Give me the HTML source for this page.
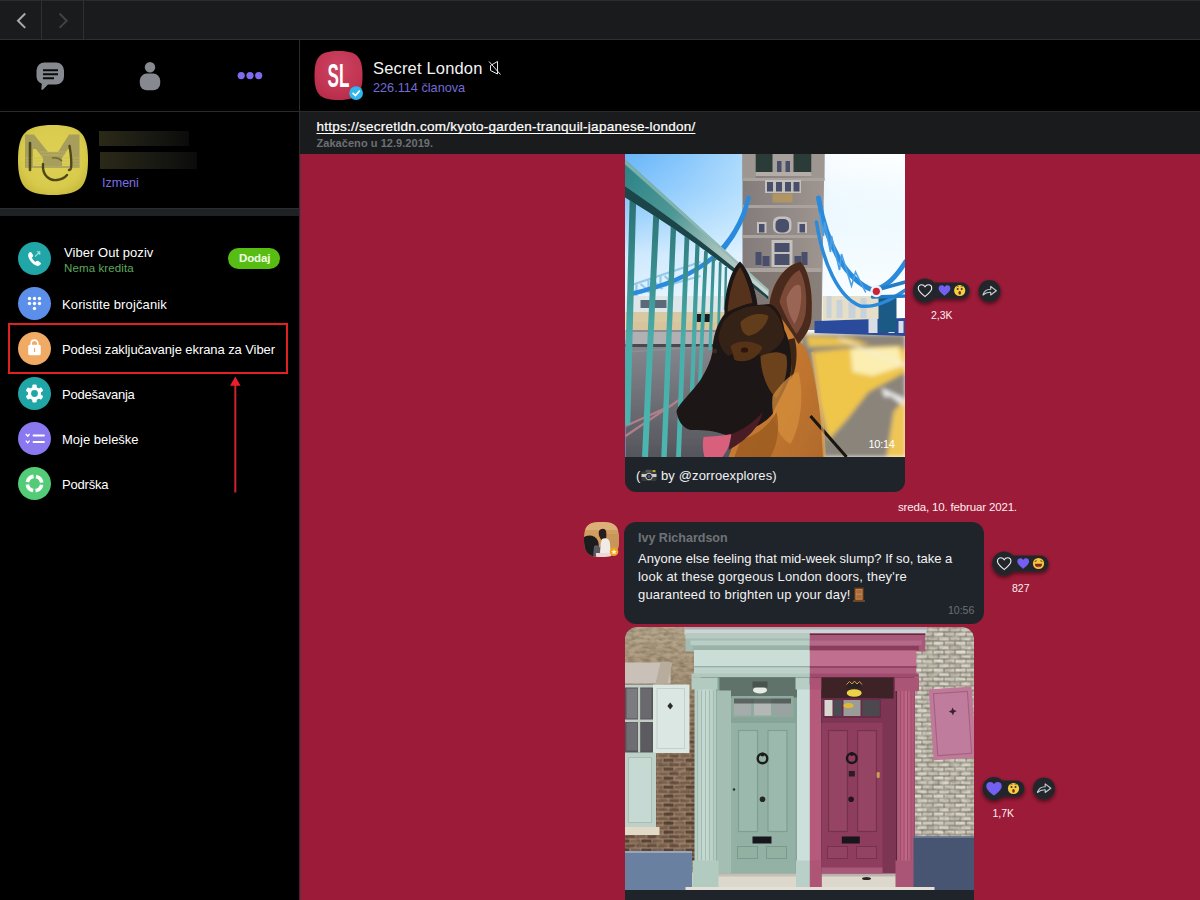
<!DOCTYPE html>
<html lang="sr">
<head>
<meta charset="utf-8">
<title>Viber</title>
<style>
*{box-sizing:border-box;margin:0;padding:0}
html,body{width:1200px;height:900px;overflow:hidden;background:#000}
body{font-family:"Liberation Sans","DejaVu Sans",sans-serif;color:#fff;position:relative}
.abs{position:absolute}
#topbar{left:0;top:0;width:1200px;height:40px;background:#1a1b1d;border-top:1px solid #2a2c2e;border-bottom:1px solid #2e3032}
#topbar .v{position:absolute;top:0;width:1px;height:38px;background:#2e3032}
#side{left:0;top:40px;width:299px;height:860px;background:#000}
#sideline{left:299px;top:40px;width:1px;height:860px;background:#2a2c2e}
#sideline2{left:299px;top:154px;width:2px;height:746px;background:linear-gradient(90deg,#3a1c26,#7d3048)}
#navline{left:0;top:111px;width:1200px;height:1px;background:#292a2c}
#sep{left:0;top:208px;width:299px;height:8px;background:#1e2224;border-top:1px solid #2a2e30}
#chathead{left:300px;top:40px;width:900px;height:71px;background:#000}
#pinned{left:300px;top:112px;width:900px;height:42px;background:#1a1b1d}
#chat{left:300px;top:154px;width:900px;height:746px;background:#9c1b38}
.t{position:absolute;white-space:nowrap;line-height:1}
.ic{position:absolute;width:33px;height:33px;border-radius:50%}
</style>
</head>
<body>
<div id="topbar" class="abs"><div class="v" style="left:41px"></div><div class="v" style="left:83px"></div>
<svg class="abs" style="left:0;top:0" width="90" height="40" viewBox="0 0 90 40"><path d="M25.200 12.500 L18 19.700 L25.200 26.900" fill="none" stroke="#a9abae" stroke-width="2"/><path d="M59.500 12.500 L66.700 19.700 L59.500 26.900" fill="none" stroke="#3f4246" stroke-width="2"/></svg>
</div>
<div id="side" class="abs"></div>
<div id="sideline" class="abs"></div><div id="sideline2" class="abs" style="z-index:2"></div>
<div id="chathead" class="abs"></div>
<div id="navline" class="abs"></div>
<div id="sep" class="abs"></div>
<div id="pinned" class="abs"></div>
<div id="chat" class="abs"></div>
<svg class="abs" style="left:0;top:40px" width="299" height="70" viewBox="0 40 299 70">
<path d="M44.5 62.5 h11.5 a8 8 0 0 1 8 8 v6 a8 8 0 0 1 -8 8 h-8 l-5 5 q-1.6 1.2 -1.6 -0.8 l0.4 -5 a8 8 0 0 1 -5.3 -7.2 v-6 a8 8 0 0 1 8 -8z" fill="#868a90"/>
<path d="M43 70.2h15M43 74.2h15M43 78.2h11" stroke="#0a0a0a" stroke-width="2"/>
<circle cx="150" cy="67.3" r="5.2" fill="#868a90"/>
<rect x="139.8" y="73.6" width="20.4" height="16.6" rx="7" ry="7" fill="#868a90"/>
<circle cx="241.2" cy="75.6" r="3.6" fill="#7d6bef"/><circle cx="250" cy="75.6" r="3.6" fill="#7d6bef"/><circle cx="258.7" cy="75.6" r="3.6" fill="#7d6bef"/>
</svg>
<svg class="abs" style="left:0;top:111px" width="299" height="97" viewBox="0 111 299 97">
<defs>
<radialGradient id="yg" cx="0.5" cy="0.45" r="0.6"><stop offset="0" stop-color="#ddd055"/><stop offset="0.75" stop-color="#d8cb4c"/><stop offset="1" stop-color="#c8b93c"/></radialGradient>
<linearGradient id="rb" x1="0" x2="1"><stop offset="0" stop-color="#2b2917"/><stop offset="0.5" stop-color="#1b1b14"/><stop offset="1" stop-color="#0b0b0b"/></linearGradient>
</defs>
<path d="M53 125 C80 125 88 133 88 160 C88 187 80 195 53 195 C26 195 18 187 18 160 C18 133 26 125 53 125Z" fill="url(#yg)"/>
<path d="M25 168 V134.5 H34 L48 152 H58 L69 134.5 H79.5 V168 H25Z M33 166 H43 V158 L36 149 H33Z M62 158 V166 H70 V149 H68Z" fill="#a39a5c" fill-rule="evenodd" opacity="0.92"/>
<path d="M26 158h17M26 161h17M26 164h17M26 167h53M62 158h17M62 161h17M62 164h17M40 152h26M40 155h26" stroke="#c4ba66" stroke-width="0.8" opacity="0.8"/>
<path d="M30 143 V170" stroke="#3d380f" stroke-width="2.6" stroke-linecap="round" opacity="0.85"/>
<path d="M69.5 146 Q72 160 71 168 Q70.5 170 69 170" fill="none" stroke="#3d380f" stroke-width="2.4" stroke-linecap="round" opacity="0.85"/>
<path d="M43 164 C42 176 50 181 57 180 C62 179.5 65 177.5 67 175" fill="none" stroke="#3d380f" stroke-width="2.4" stroke-linecap="round" opacity="0.9"/>
<path d="M52 158 Q58 157 62 161" fill="none" stroke="#5a5220" stroke-width="1.6" opacity="0.7"/>
<rect x="99" y="131" width="90" height="15" fill="url(#rb)"/>
<rect x="100" y="152" width="97" height="17" fill="url(#rb)"/>
</svg>
<div class="t" style="left:102px;top:177px;font-size:12.5px;color:#7b6fe6">Izmeni</div>
<div class="ic" style="left:18px;top:242px;background:#20a6a6"></div>
<div class="ic" style="left:18px;top:287px;background:#5b8fe9"></div>
<div class="ic" style="left:18px;top:332px;background:#f0aa64"></div>
<div class="ic" style="left:18px;top:377px;background:#20a6a6"></div>
<div class="ic" style="left:18px;top:422px;background:#8a78f0"></div>
<div class="ic" style="left:18px;top:467px;background:#52cc76"></div>
<svg class="abs" style="left:18px;top:242px" width="33" height="258" viewBox="18 242 33 258">
<!-- phone -->
<path d="M29.2 252.6 q1.4 -1.2 2.4 0.2 l1.4 2.2 q0.6 1.2 -0.4 2 l-0.8 0.7 q1.2 2.6 3.6 4.2 l0.9 -0.8 q0.9 -0.8 2 -0.1 l2 1.4 q1.2 1 0.2 2.2 q-1.8 2.2 -4.4 1 q-5.4 -2.6 -7.6 -8.400000000000001 q-0.9 -2.8 0.7 -4.6z" fill="#fff"/>
<path d="M35 256.6 l4.6 -4.6 M36.8 251.8 h3 v3" fill="none" stroke="#9fe0e0" stroke-width="1.1"/>
<!-- dialpad -->
<g fill="#fff"><circle cx="29.5" cy="298.5" r="1.7"/><circle cx="34.5" cy="298.5" r="1.7"/><circle cx="39.5" cy="298.5" r="1.7"/><circle cx="29.5" cy="303.5" r="1.7"/><circle cx="34.5" cy="303.5" r="1.7"/><circle cx="39.5" cy="303.5" r="1.7"/><circle cx="34.5" cy="308.5" r="1.7"/></g>
<!-- lock -->
<path d="M31.2 345 v-1.6 a3.3 3.3 0 0 1 6.6 0 v1.6" fill="none" stroke="#fff" stroke-width="1.6"/>
<rect x="28.2" y="344.8" width="12.6" height="10.4" rx="1.6" fill="#fff"/>
<rect x="34" y="348" width="1.1" height="4" fill="#f0aa64"/>
<!-- gear -->
<g transform="translate(34.5 393.5)"><g fill="#fff"><circle r="6.6"/><g id="tt"><rect x="-2.2" y="-9" width="4.4" height="18" rx="1.2"/></g><use href="#tt" transform="rotate(60)"/><use href="#tt" transform="rotate(120)"/></g><circle r="3.4" fill="#20a6a6"/></g>
<!-- notes -->
<g stroke="#fff" fill="none" stroke-width="1.8" stroke-linecap="round"><path d="M33.500 435.500h10.500M33.500 442h10.500"/></g>
<g stroke="#fff" fill="none" stroke-width="1.3"><path d="M25.800 434l1.900 2.200 1.900-2.200M25.800 440.600l1.900 2.200 1.900-2.200"/></g>
<!-- support -->
<circle cx="34.5" cy="483.5" r="7.2" fill="none" stroke="#fff" stroke-width="3.6" stroke-dasharray="8.9 2.4" stroke-dashoffset="10.050"/>
</svg>
<div class="t" style="left:64px;top:245.5px;font-size:13px;letter-spacing:0.05px">Viber Out poziv</div>
<div class="t" style="left:64px;top:263px;font-size:11.5px;letter-spacing:0.12px;color:#5fa85e">Nema kredita</div>
<div class="abs" style="left:228px;top:248px;width:52px;height:21px;border-radius:10.5px;background:#58bd12"></div>
<div class="t" style="left:239px;top:253.200px;font-size:11.5px;font-weight:700;letter-spacing:-0.15px;color:#f0ffe8">Dodaj</div>
<div class="t" style="left:62px;top:297.5px;font-size:13px;letter-spacing:0.12px">Koristite brojčanik</div>
<div class="t" style="left:62px;top:342.5px;font-size:13px;letter-spacing:-0.08px">Podesi zaključavanje ekrana za Viber</div>
<div class="t" style="left:62px;top:387.5px;font-size:13px;letter-spacing:-0.24px">Podešavanja</div>
<div class="t" style="left:62px;top:432.5px;font-size:13px">Moje beleške</div>
<div class="t" style="left:62px;top:477.5px;font-size:13px;letter-spacing:-0.2px">Podrška</div>
<div class="abs" style="left:8px;top:323px;width:280px;height:51px;border:2px solid #e0211f"></div>
<svg class="abs" style="left:226px;top:374px" width="20" height="122" viewBox="226 374 20 122"><path d="M235.3 384 V492.5" stroke="#cc2232" stroke-width="2"/><path d="M235.3 376.5 L240.6 385.8 H230 Z" fill="#ea1f2a"/></svg>
<svg class="abs" style="left:300px;top:41px" width="220" height="69" viewBox="300 41 220 69">
<defs><radialGradient id="slg" cx="0.5" cy="0.35" r="0.75"><stop offset="0" stop-color="#cc4463"/><stop offset="0.6" stop-color="#c23553"/><stop offset="1" stop-color="#b02a47"/></radialGradient></defs>
<path d="M338.5 51 C357 51 362.5 56.5 362.5 75.5 C362.5 94.5 357 100 338.5 100 C320 100 314.5 94.500 314.500 75.5 C314.500 56.5 320 51 338.5 51Z" fill="url(#slg)"/>
<text x="327.6" y="87.300" font-family="'Liberation Sans',sans-serif" font-weight="700" font-size="33" fill="#fff" textLength="21.8" lengthAdjust="spacingAndGlyphs">SL</text>
<circle cx="356.1" cy="93.1" r="6.9" fill="#2fb6ee"/>
<path d="M352.6 92.8 L355.4 95.6 L359.8 90.6" fill="none" stroke="#fff" stroke-width="1.7"/>
<g fill="none" stroke="#e8e8e8" stroke-width="1"><path d="M490.5 65.5 L497.500 61.5 V74 L490.5 70.5 Z"/><path d="M489 61.5 L500.5 74.5"/></g>
</svg>
<div class="t" style="left:373px;top:59.5px;font-size:16.5px;letter-spacing:0.17px;color:#f4f4f4">Secret London</div>
<div class="t" style="left:373px;top:82px;font-size:12.7px;color:#746bd6">226.114 članova</div>
<div class="t" style="left:316.5px;top:120px;font-size:13.5px;font-weight:400;-webkit-text-stroke:0.22px #fff;letter-spacing:0.25px;text-decoration:underline;text-underline-offset:1.6px;text-decoration-thickness:1.3px;text-decoration-skip-ink:none">https://secretldn.com/kyoto-garden-tranquil-japanese-london/</div>
<div class="t" style="left:316.5px;top:137.5px;font-size:11px;font-weight:700;letter-spacing:0.05px;color:#6c7074">Zakačeno u 12.9.2019.</div>
<!-- dog message -->
<div class="abs" style="left:624.5px;top:154px;width:280.5px;height:337.5px;background:#1f242a;border-radius:0 0 11px 11px;overflow:hidden">
<!--DOGS--><svg class="abs" style="left:0;top:0" width="280.5" height="303" viewBox="624.5 154 280.5 303" preserveAspectRatio="none">
<defs>
<linearGradient id="dsky" x1="0" x2="1" y1="0" y2="0"><stop offset="0" stop-color="#62b2f8"/><stop offset="0.200" stop-color="#80c2fc"/><stop offset="0.400" stop-color="#a6d6fc"/><stop offset="0.600" stop-color="#dceefb"/><stop offset="0.730" stop-color="#fbfdff"/><stop offset="1" stop-color="#ffffff"/></linearGradient>
<linearGradient id="dsk2" x1="0" x2="0" y1="0" y2="1"><stop offset="0" stop-color="#d8f4ff" stop-opacity="0"/><stop offset="0.200" stop-color="#d0f0ff" stop-opacity="0.250"/><stop offset="0.550" stop-color="#f0faff" stop-opacity="0.750"/><stop offset="1" stop-color="#fff" stop-opacity="0.950"/></linearGradient>
<linearGradient id="dtow" x1="0" x2="1"><stop offset="0" stop-color="#847c7a"/><stop offset="0.500" stop-color="#908886"/><stop offset="1" stop-color="#a09690"/></linearGradient>
<linearGradient id="droad" x1="0" x2="0" y1="0" y2="1"><stop offset="0" stop-color="#8c8c94"/><stop offset="0.450" stop-color="#74747c"/><stop offset="1" stop-color="#55555c"/></linearGradient>
<linearGradient id="dfur" x1="0" x2="1" y1="0" y2="1"><stop offset="0" stop-color="#a05c20"/><stop offset="0.5" stop-color="#c87a30"/><stop offset="1" stop-color="#b06a2c"/></linearGradient>
<linearGradient id="dbal" gradientUnits="userSpaceOnUse" x1="0" x2="0" y1="196" y2="457"><stop offset="0" stop-color="#2b6e70"/><stop offset="0.250" stop-color="#37898a"/><stop offset="0.550" stop-color="#48aeaa"/><stop offset="1" stop-color="#4cb6b0"/></linearGradient>
<linearGradient id="drail" gradientUnits="userSpaceOnUse" x1="624" x2="768" y1="170" y2="290"><stop offset="0" stop-color="#2c8486"/><stop offset="0.350" stop-color="#4f9896"/><stop offset="0.650" stop-color="#a4bfba"/><stop offset="1" stop-color="#cdd6d2"/></linearGradient>
<filter id="b1"><feGaussianBlur stdDeviation="0.7"/></filter>
<filter id="b2"><feGaussianBlur stdDeviation="2.2"/></filter>
<filter id="b3"><feGaussianBlur stdDeviation="4"/></filter>
</defs>
<g filter="url(#b1)">
<rect x="620" y="150" width="290" height="310" fill="url(#dsky)"/>
<rect x="620" y="150" width="290" height="190" fill="url(#dsk2)"/>
<!-- distant left bridge + traffic -->
<g stroke="#8cc4ea" stroke-width="2.2" fill="none" opacity="0.9"><path d="M628 286 L700 262 M628 296 L700 276 M636 284v12 M648 280v13 M660 276v13 M672 272v13 M684 268v13 M640 284l10 8 M652 280l10 9 M664 276l10 9"/></g>
<rect x="625" y="296" width="100" height="18" fill="#dfe6ea"/><rect x="625" y="312" width="100" height="10" fill="#d9c9a2"/>
<rect x="640" y="300" width="26" height="8" fill="#5a6a78"/><rect x="696" y="314" width="14" height="30" fill="#1c1e22"/>
<rect x="625" y="322" width="100" height="10" fill="#d8c49a"/>
<rect x="625" y="330" width="110" height="127" fill="url(#droad)"/>
<path d="M625 332 H720 V344 H625Z" fill="#b2b0b2"/><path d="M625 344 H720 V347 H625Z" fill="#4a4a50"/>
<path d="M625 352 L700 347" stroke="#8e8e94" stroke-width="1.600"/>
<path d="M625 426 L672 405 M625 436 L680 399" stroke="#b0808a" stroke-width="2.200"/>
<!-- tower -->
<path d="M742 154 H824 L821 330 H742Z" fill="url(#dtow)"/>
<path d="M755 154 H811 V173 H755Z" fill="#2c3a38"/>
<path d="M772 154 h21 v20 h-21z" fill="#a8a09a"/>
<path d="M742 154 h13 v26 h-13z M811 154 h13 v26 h-13z" fill="#9e9690"/>
<path d="M755 172 h56 v4 h-56z" fill="#b4aca6"/>
<path d="M742 178 h82 v3 h-82z M742 205 h81 v3 h-81z M742 235 h80 v3 h-80z M742 268 h79 v4 h-79z" fill="#aaa29c"/>
<path d="M742 272 h79 v58 h-79z" fill="#7c726c" opacity="0.600"/>
<g fill="#c4c0bc"><rect x="764.500" y="180" width="36" height="13"/><rect x="772.500" y="216.500" width="18.500" height="17" rx="6"/><rect x="756.500" y="222" width="9.500" height="11"/><rect x="797" y="222" width="9.500" height="11"/><rect x="771" y="240" width="21" height="27"/></g>
<g fill="#48506a"><rect x="776.500" y="161" width="4.500" height="11"/><rect x="785" y="161" width="4.500" height="11"/><rect x="766.500" y="182" width="6" height="9.500"/><rect x="775.500" y="182" width="6" height="9.500"/><rect x="784.500" y="182" width="6" height="9.500"/><rect x="793" y="182" width="6" height="9.500"/><rect x="758.500" y="224" width="5.500" height="8.500"/><rect x="775" y="219" width="13.500" height="13.500" rx="5"/><rect x="799" y="224" width="5.500" height="8.500"/><rect x="774" y="243" width="15" height="9"/><rect x="774" y="254" width="15" height="11"/><rect x="755" y="252" width="6" height="13"/><rect x="801" y="252" width="6" height="13"/><rect x="762" y="256" width="7" height="10"/><rect x="794" y="256" width="7" height="10"/></g>
<rect x="772" y="193.500" width="20" height="9" fill="#b89a58" opacity="0.750"/>
<!-- right skyline, fence -->
<rect x="822" y="296" width="60" height="24" fill="#e6dfc8"/>
<g fill="#c8d2d8"><rect x="826" y="296" width="5" height="22"/><rect x="836" y="300" width="6" height="18"/><rect x="848" y="302" width="7" height="16"/><rect x="860" y="298" width="6" height="20"/></g>
<!-- pavement --><g filter="url(#b2)">
<path d="M800 334 H905 V457 H800Z" fill="#8a847a"/>
<path d="M806 336 L850 338 L870 345 L808 347Z" fill="#e9c34e"/>
<path d="M812 352 L852 348 L900 346 L905 352 L905 372 L868 392 L846 420 L828 440 L818 400 Z" fill="#efc64a"/>
<path d="M850 349 L898 347 L903 366 L872 376 L852 372Z" fill="#fbeeb0"/>
<path d="M893 412 L905 398 V457 H886Z" fill="#eec659"/>
<path d="M881 388 L903 398 L903 406 L890 396 L884 397Z" fill="#eee"/>
<path d="M838 338 L870 352 L905 366" stroke="#f4f0e0" stroke-width="1.600" fill="none"/>
</g><!-- blue fence right -->
<path d="M814 321 L905 318 V336 L814 333Z" fill="#2b4c9c"/>
<g fill="#d9dde6"><rect x="868" y="318" width="9" height="15"/><rect x="888" y="321" width="6" height="12"/><rect x="898" y="321" width="5" height="12"/></g>
<path d="M878 296 h18 v36 h-18z" fill="#1f5a86"/>
<!-- chains -->
<g fill="none" stroke="#2a8bdc" stroke-linecap="round">
<path d="M748 198 C742 222 730 242 712 258 C690 276 664 286 630 294" stroke-width="4.500"/>
<path d="M745 212 C738 232 728 246 714 260" stroke-width="2.500"/>
<path d="M818 198 C826 246 846 280 872 290 C886 288 896 276 905 262" stroke-width="5"/>
<path d="M816 222 C822 262 838 298 860 306 C876 308 890 300 905 290" stroke-width="3.500"/>
<path d="M819 214 l4 22 l1 -14 l6 30 l1 -16 l8 34 l2 -16 l10 32 l4 -14 l10 20" stroke-width="1.600" stroke="#4aa0e4"/>
<path d="M872 291 L905 282 M872 297 L905 296" stroke-width="3.500" stroke="#237cc6"/>
</g>
<circle cx="875.800" cy="291.300" r="6" fill="#eef2f6"/><circle cx="875.800" cy="291.300" r="3.600" fill="#cc2038"/>
<!-- railing -->
<g fill="none" stroke="url(#dbal)">
<path d="M632.500 196 L626.500 425" stroke-width="6.500"/>
<path d="M655.800 214 L644.500 457" stroke-width="6"/>
<path d="M673 226 L663.500 457" stroke-width="5.400"/>
<path d="M686.500 236 L678 457" stroke-width="4.800"/>
<path d="M697 244 L690.500 420" stroke-width="4.200"/>
<path d="M705.500 251 L699 390" stroke-width="3.800"/>
<path d="M713 257 L709.500 350" stroke-width="3.200"/>
<path d="M719.800 262 L718 330" stroke-width="2.800"/>
<path d="M725.500 267 L724.500 310" stroke-width="2.400"/>
</g>
<path d="M624 159 L768 289.500 L768 300 Q700 243 624 197Z" fill="url(#drail)"/>
<path d="M624 186 Q700 238 768 296.500 L768 300 Q700 243 624 197Z" fill="#1a4448"/>
<path d="M624 159 L768 289.500 L768 292 L624 164Z" fill="#8fbab4" opacity="0.800"/>
</g>
<!-- dog -->
<g filter="url(#b1)">
<path d="M769 304 C771 286 782 266 800 261.500 C808 270 813 290 811 318 C810 330 803 336 800 342 C812 352 816 392 822 426 L824 457 H728 L736 436 L772 412 L778 380 L770 340Z" fill="url(#dfur)"/>
<path d="M769 304 C771 286 782 266 800 261.500 C808 270 813 290 811 318 C810 330 803 338 798 344 C790 330 780 316 769 304Z" fill="#4a2a1a"/>
<path d="M779 302 C782 288 790 274 799 270 C805 280 807 298 805 314 C803 324 799 330 796 334 C790 326 784 314 779 302Z" fill="#7a4a38"/>
<path d="M786 298 C790 288 796 282 800 286 C802 298 800 314 794 324 C790 318 786 308 786 298Z" fill="#a06a5a" opacity="0.850"/>
<path d="M724 314 C724 292 730 270 739.500 261.500 C748 270 755 288 757 305 L769 304 C776 306 782 316 784 330 C790 342 792 360 790 376 C784 392 776 404 772 414 C764 424 748 432 730 436 L722 434 C712 430 700 430 690 430 C682 428 677 420 676 411 C678 404 690 394 700 380 C706 370 710 362 712 352 C712 338 716 324 724 314Z" fill="#1c1412"/>
<path d="M727 312 C728 294 733 276 739.500 267 C745 276 750 290 752 303 C744 304 735 308 727 312Z" fill="#55301e"/>
<path d="M726 318 C736 308 752 304 768 306 C778 312 782 324 784 336 C780 346 772 352 762 356 C750 350 738 350 728 356 C722 352 718 344 718 336 C720 328 722 322 726 318Z" fill="#3a2214" opacity="0.900"/>
<path d="M740 322 C748 314 760 312 768 316 C766 326 758 334 748 336 C742 334 740 328 740 322Z" fill="#6e441e" opacity="0.800"/>
<path d="M730 346 C738 340 752 340 762 347 C758 358 746 364 734 360Z" fill="#5a3418" opacity="0.900"/>
<path d="M760 356 C770 352 780 350 786 356 C788 370 784 386 776 398 C768 392 760 374 760 356Z" fill="#7a4a1e" opacity="0.850"/>
<path d="M786 340 C790 352 792 366 790 380 C796 372 798 352 794 338Z" fill="#1c1412" opacity="0.800"/>
<path d="M772 396 C780 384 790 374 798 372 C804 396 800 426 790 444 C778 438 770 418 772 396Z" fill="#d48e3e" opacity="0.750"/>
<path d="M740 440 C756 436 770 424 776 412 C780 430 776 446 770 457 H734Z" fill="#9a5a22" opacity="0.800"/>
<path d="M703 437 C712 436 722 436 731 434 C730 444 726 452 722 457 H704 C702 450 702 444 703 437Z" fill="#d8607c"/>
<path d="M731 434 C742 430 754 422 762 412 C760 424 750 438 728 450 Z" fill="#4a1c26"/>
<ellipse cx="744" cy="350" rx="3.600" ry="2.600" fill="#2a140a"/><ellipse cx="714.500" cy="351" rx="2" ry="2.600" fill="#3a2a20"/>
<path d="M810 416 L846 457" stroke="#18120e" stroke-width="3"/>
<path d="M812 352 C818 380 822 420 824 457" stroke="#e8b060" stroke-width="3" fill="none" opacity="0.600"/>
</g>
</svg>
<!--DOGE-->
</div>
<div class="t" style="left:868.5px;top:439px;font-size:11px;letter-spacing:-0.3px;color:#fff">10:14</div>
<div class="t" style="left:636px;top:468.5px;font-size:13px;color:#f2f2f2">(</div>
<svg class="abs" style="left:641px;top:469px" width="16" height="13" viewBox="0 0 16 13"><rect x="0.5" y="2.5" width="15" height="9.5" rx="1.3" fill="#3a3a3a"/><rect x="0.5" y="5" width="15" height="3" fill="#c8c8c8"/><rect x="4.5" y="0.8" width="6" height="2.5" fill="#555"/><rect x="11.5" y="1.2" width="3" height="1.6" fill="#e8c040"/><circle cx="8" cy="7.5" r="3.3" fill="#222" stroke="#e0e0e0" stroke-width="0.9"/><circle cx="8" cy="7.5" r="1.4" fill="#4a5a78"/></svg>
<div class="t" style="left:661px;top:468.5px;font-size:13px;letter-spacing:0.12px;color:#f2f2f2">by @zorroexplores)</div>
<!-- reactions 1 -->
<svg class="abs" style="left:900px;top:260px" width="180" height="580" viewBox="900 260 180 580">
<defs>
<filter id="sh" x="-40%" y="-40%" width="180%" height="180%"><feGaussianBlur in="SourceAlpha" stdDeviation="2"/><feOffset dy="1.5"/><feComponentTransfer><feFuncA type="linear" slope="0.55"/></feComponentTransfer><feMerge><feMergeNode/><feMergeNode in="SourceGraphic"/></feMerge></filter>
<path id="hrt" d="M0 4.600 C-1.200 3.600 -5.600 0.600 -5.600 -2.200 C-5.600 -4.200 -4.200 -5.200 -2.800 -5.200 C-1.600 -5.200 -0.600 -4.600 0 -3.600 C0.600 -4.600 1.600 -5.200 2.800 -5.200 C4.200 -5.200 5.600 -4.200 5.600 -2.200 C5.600 0.600 1.200 3.600 0 4.600Z"/>
<g id="shr"><circle r="11" fill="#23282c"/><path d="M-6.500 4 C-5.500 0.200 -2.500 -1.800 1.200 -1.800 V-4.600 L6.800 -0.200 L1.200 4 V1.200 C-2 1 -4.500 2 -6.500 4Z" fill="none" stroke="#c9ccd0" stroke-width="1.100" stroke-linejoin="round"/></g>
<g id="wow"><circle r="5.600" fill="#f6cf45"/><circle cx="-2" cy="-1.600" r="1" fill="#4a3210"/><circle cx="2" cy="-1.600" r="1" fill="#4a3210"/><ellipse cx="0" cy="2.300" rx="1.300" ry="1.900" fill="#7a2a18"/><path d="M-3.200 -3.600 q1.200 -1 2.200 -0.300 M1 -3.900 q1.200 -0.700 2.200 0.300" stroke="#4a3210" stroke-width="0.600" fill="none"/></g>
<g id="lol"><circle r="5.600" fill="#f6c63c"/><path d="M-3.600 0.200 H3.600 A3.600 3.600 0 0 1 -3.600 0.200Z" fill="#7a2a18"/><path d="M-2.600 2.400 q2.600 1.600 5.200 0" fill="#e8505a"/><path d="M-3.800 -2 l2 -0.800 M3.800 -2 l-2 -0.800" stroke="#4a3210" stroke-width="0.900"/></g>
</defs>
<!-- r1 -->
<g filter="url(#sh)"><rect x="925" y="282.5" width="44.500" height="16" rx="8" fill="#23282c"/><circle cx="925" cy="290.500" r="12" fill="#23282c"/></g>
<use href="#hrt" transform="translate(925 291) scale(1.200)" fill="none" stroke="#eceef0" stroke-width="0.950"/>
<use href="#hrt" transform="translate(944.500 290.800) scale(1.050)" fill="#7360f2"/>
<use href="#wow" transform="translate(959.700 290.500)"/>
<g filter="url(#sh)"><use href="#shr" transform="translate(989.500 291)"/></g>
<!-- r2 -->
<g filter="url(#sh)"><rect x="1004" y="555.5" width="44.500" height="16" rx="8" fill="#23282c"/><circle cx="1004.200" cy="563.500" r="12" fill="#23282c"/></g>
<use href="#hrt" transform="translate(1004.200 564) scale(1.200)" fill="none" stroke="#eceef0" stroke-width="0.950"/>
<use href="#hrt" transform="translate(1023.200 563.800) scale(1.050)" fill="#7360f2"/>
<use href="#lol" transform="translate(1038.500 563.500)"/>
<!-- r3 -->
<g filter="url(#sh)"><rect x="994" y="780.5" width="30.500" height="16" rx="8" fill="#23282c"/><circle cx="994" cy="788.500" r="11.500" fill="#23282c"/><use href="#shr" transform="translate(1044 788.500)"/></g>
<use href="#hrt" transform="translate(994 789.200) scale(1.380)" fill="#7360f2"/>
<use href="#wow" transform="translate(1013.500 788.500)"/>
</svg>
<div class="t" style="left:931px;top:309.500px;font-size:10.5px;color:#ffeef2">2,3K</div>
<div class="t" style="left:1012px;top:582.500px;font-size:10.5px;color:#ffeef2">827</div>
<div class="t" style="left:992.500px;top:807.500px;font-size:10.5px;color:#ffeef2">1,7K</div>
<div class="t" style="left:898px;top:501.5px;font-size:11.5px;letter-spacing:-0.16px;color:#ffeef2">sreda, 10. februar 2021.</div>
<!-- text message -->
<svg class="abs" style="left:580px;top:518px" width="44" height="44" viewBox="580 518 44 44">
<defs><clipPath id="ivc"><path d="M601.500 522 C615 522 619 526 619 539.500 C619 553 615 557 601.500 557 C588 557 584 553 584 539.500 C584 526 588 522 601.500 522Z"/></clipPath><filter id="ivb"><feGaussianBlur stdDeviation="0.700"/></filter></defs>
<g clip-path="url(#ivc)"><rect x="582" y="520" width="40" height="40" fill="#cf9e60"/>
<g filter="url(#ivb)"><rect x="584" y="522" width="36" height="8" fill="#dcb078"/><rect x="606" y="534" width="14" height="16" fill="#c89658"/>
<path d="M583 538 C588 534 595 535 598 541 C600 548 598 554 596 558 H583Z" fill="#1c1a1e"/>
<path d="M599 531 C601 528 605 528 606 531 C607 536 606 541 604 543 C600 546 597 550 597 557 H603 V541 C600 539 598 535 599 531Z" fill="#2a1c1a"/>
<path d="M602 539 C606 537 610 539 610 544 L611 558 H600 C600 550 600 544 602 539Z" fill="#f0ebe6"/>
<path d="M594 546 C597 544 600 546 600 550 L600 558 H593Z" fill="#5a5a66"/>
<path d="M596 553 h14 v5 h-14z" fill="#ecd8d4"/></g></g>
<circle cx="614" cy="551.800" r="4.300" fill="#f0a41e"/><path d="M614 549.200 l0.800 1.700 l1.900 0.200 l-1.400 1.300 l0.400 1.900 l-1.700 -1 l-1.700 1 l0.400 -1.900 l-1.400 -1.300 l1.900 -0.200z" fill="#fff6d8"/>
</svg>
<div class="abs" style="left:624px;top:522px;width:359.5px;height:101.5px;background:#1f242a;border-radius:12px"></div>
<div class="t" style="left:638px;top:531.500px;font-size:12.5px;font-weight:700;color:#6f7378">Ivy Richardson</div>
<div class="t" style="left:638px;top:552px;font-size:13px;color:#f2f2f2">Anyone else feeling that mid-week slump? If so, take a</div>
<div class="t" style="left:638px;top:570px;font-size:13px;letter-spacing:0.19px;color:#f2f2f2">look at these gorgeous London doors, they're</div>
<div class="t" style="left:638px;top:588px;font-size:13px;letter-spacing:0.19px;color:#f2f2f2">guaranteed to brighten up your day!</div>
<svg class="abs" style="left:853px;top:587px" width="12" height="15" viewBox="0 0 12 15"><rect x="1" y="0.5" width="10" height="13.5" fill="#5a3418"/><rect x="2.4" y="1.8" width="7.2" height="11" fill="#c08450"/><rect x="3.4" y="3" width="5.2" height="3.6" fill="#a86c3c"/><rect x="3.4" y="8" width="5.2" height="3.6" fill="#a86c3c"/><rect x="0" y="13.2" width="12" height="1.6" fill="#7a4a24"/></svg>
<div class="t" style="left:948px;top:604.5px;font-size:10.5px;color:#6c7074">10:56</div>
<!-- doors message -->
<div class="abs" style="left:624.5px;top:626.5px;width:349px;height:290px;background:#1f242a;border-radius:12px;overflow:hidden">
<!--DOORS--><svg class="abs" style="left:0;top:0" width="349" height="263.5" viewBox="624.5 626.5 349 263.5" preserveAspectRatio="none">
<defs>
<pattern id="brL" width="22" height="9" patternUnits="userSpaceOnUse" patternTransform="translate(624 627)">
<rect width="22" height="9" fill="#ac9476"/>
<rect x="0.500" y="0.500" width="10" height="3.400" fill="#6a5044"/><rect x="11.500" y="0.500" width="10" height="3.400" fill="#7e6250"/>
<rect x="-5" y="5" width="10" height="3.400" fill="#5c4438"/><rect x="6" y="5" width="10" height="3.400" fill="#86695a"/><rect x="17" y="5" width="10" height="3.400" fill="#5c4438"/>
</pattern>
<pattern id="brR" width="22" height="9" patternUnits="userSpaceOnUse" patternTransform="translate(916 627)">
<rect width="22" height="9" fill="#6a655e"/>
<rect x="0.500" y="0.500" width="10" height="3.400" fill="#d6d2c2"/><rect x="11.500" y="0.500" width="10" height="3.400" fill="#bdb8a6"/>
<rect x="-5" y="5" width="10" height="3.400" fill="#dedacb"/><rect x="6" y="5" width="10" height="3.400" fill="#c8c3b2"/><rect x="17" y="5" width="10" height="3.400" fill="#dedacb"/>
</pattern>
<linearGradient id="wlL" x1="0" x2="0" y1="0" y2="1"><stop offset="0" stop-color="#bdb094" stop-opacity="0.900"/><stop offset="0.200" stop-color="#b4a284" stop-opacity="0.800"/><stop offset="0.450" stop-color="#a08a68" stop-opacity="0.150"/><stop offset="1" stop-color="#5a3c30" stop-opacity="0"/></linearGradient>
<linearGradient id="flS" x1="0" x2="1"><stop offset="0" stop-color="#b4ccc4"/><stop offset="0.500" stop-color="#c6dbd4"/><stop offset="1" stop-color="#b0cac0"/></linearGradient>
<linearGradient id="flP" x1="0" x2="1"><stop offset="0" stop-color="#ae5676"/><stop offset="0.500" stop-color="#c06a88"/><stop offset="1" stop-color="#a85070"/></linearGradient>
<filter id="nz" x="0" y="0" width="100%" height="100%"><feTurbulence type="fractalNoise" baseFrequency="0.14 0.28" numOctaves="2" seed="7" result="n"/><feColorMatrix in="n" type="matrix" values="0 0 0 0 0  0 0 0 0 0  0 0 0 0 0  1.600 0 0 0 -0.550" result="a"/><feFlood flood-color="#2a2420"/><feComposite operator="in" in2="a"/></filter>
<filter id="nzw" x="0" y="0" width="100%" height="100%"><feTurbulence type="fractalNoise" baseFrequency="0.12 0.250" numOctaves="2" seed="3" result="n"/><feColorMatrix in="n" type="matrix" values="0 0 0 0 0  0 0 0 0 0  0 0 0 0 0  1.600 0 0 0 -0.600" result="a"/><feFlood flood-color="#f4f0e4"/><feComposite operator="in" in2="a"/></filter>
<filter id="db1"><feGaussianBlur stdDeviation="0.500"/></filter>
</defs>
<g filter="url(#db1)">
<!-- walls -->
<rect x="620" y="620" width="80" height="280" fill="url(#brL)"/>
<rect x="620" y="620" width="80" height="280" fill="url(#wlL)"/>
<rect x="914" y="620" width="64" height="220" fill="url(#brR)"/>
<rect x="914" y="620" width="64" height="220" fill="#d8d4c4" opacity="0.200"/>
<rect x="914" y="620" width="64" height="220" filter="url(#nz)" opacity="0.250"/>
<rect x="914" y="620" width="64" height="220" filter="url(#nzw)" opacity="0.400"/>
<rect x="620" y="620" width="80" height="240" filter="url(#nz)" opacity="0.350"/>
<!-- step -->
<rect x="685" y="872" width="249" height="19" fill="#dcd8cc"/>
<rect x="716" y="872.500" width="82" height="3.500" fill="#c4c0b2"/>
<rect x="821" y="872.500" width="75" height="3.500" fill="#bcb4ac"/>
<ellipse cx="866" cy="878" rx="4.500" ry="1.600" fill="#2c2628"/>
<!-- top ledge -->
<rect x="684" y="626" width="242" height="8.500" fill="#cfd4d4"/>
<rect x="684" y="626" width="242" height="3" fill="#aab0b2"/>
<!-- left window group -->
<rect x="624" y="662" width="46" height="21" fill="#c9c1b8"/>
<path d="M660 662 L672 662 L667 683 L655 683Z" fill="#b8ad9c"/>
<rect x="624" y="683.500" width="29" height="69" fill="#555558"/>
<rect x="626" y="688" width="11" height="30" fill="#7c7c80"/><rect x="640" y="688" width="11" height="30" fill="#6a6a6e"/><rect x="626" y="722" width="11" height="28" fill="#6e6e72"/><rect x="640" y="722" width="11" height="28" fill="#5c5c60"/>
<path d="M624 719 h29 v2.500 h-29z M637.500 686 h2.200 v66 h-2.200z M624 684 h29 v3 h-29z" fill="#c4ccc6"/>
<rect x="652.500" y="684" width="36.500" height="68.500" fill="#dbe7e3"/>
<rect x="656.500" y="688" width="27.500" height="60" fill="none" stroke="#c2d2ca" stroke-width="1"/>
<path d="M669.700 702 l2.800 3.500 l-2.800 3.500 l-2.800 -3.500z" fill="#2a2a2a"/>
<rect x="624" y="752" width="31.500" height="75.500" fill="#bdd1c9"/>
<rect x="628" y="757" width="23" height="65" fill="#c6d9d2" stroke="#a9bfb5" stroke-width="1"/>
<rect x="624" y="826.500" width="35" height="8" fill="#e2dac6"/>
<rect x="620" y="850.500" width="71.500" height="45" fill="#6b80a0"/>
<rect x="620" y="850.500" width="71.500" height="2" fill="#98a6b8"/>
<!-- sage surround -->
<rect x="685" y="633" width="125" height="18" fill="#a4bcb2"/>
<rect x="685" y="633" width="125" height="5" fill="#b6cac2"/><rect x="690" y="640" width="120" height="4.500" fill="#b8cec6"/>
<rect x="692" y="645.500" width="118" height="4.500" fill="#9ab2a8"/>
<rect x="693.500" y="649.500" width="116.500" height="17" fill="#cbddd7"/><rect x="693.500" y="666" width="116.500" height="8" fill="#bdd2ca"/><rect x="693.500" y="665.500" width="116.500" height="1.300" fill="#96aea4"/>
<rect x="691" y="673" width="119" height="4" fill="#b0c8be"/>
<!-- recess sage -->
<rect x="716" y="677" width="81" height="196" fill="#86a497"/>
<rect x="719" y="677" width="78" height="20" fill="#5f736b"/>
<rect x="716" y="690" width="14.500" height="183" fill="#a4beb4"/>
<ellipse cx="759.500" cy="689.500" rx="7" ry="3.600" fill="#e8ece6"/><rect x="752" y="681" width="15" height="6" fill="#4a524e"/>
<rect x="731" y="695.500" width="62" height="21.500" fill="#8eaa9e"/>
<rect x="733.500" y="698" width="17" height="17" fill="#a5acac"/><rect x="753.500" y="698" width="17" height="17" fill="#b3b8b6"/><rect x="773.500" y="698" width="17" height="17" fill="#9aa2a2"/>
<path d="M733.500 698 h57 v5 h-57z" fill="#3c4442" opacity="0.700"/>
<rect x="730.500" y="722.500" width="64.500" height="150" fill="#93b1a5"/>
<rect x="738" y="730" width="19" height="101" fill="#9cb9ad" stroke="#7f9f92" stroke-width="1.200"/>
<rect x="767.500" y="730" width="19" height="101" fill="#9cb9ad" stroke="#7f9f92" stroke-width="1.200"/>
<rect x="737" y="846" width="20" height="12" fill="#93b1a3" stroke="#7a9a8c" stroke-width="1"/><rect x="766" y="846" width="20" height="12" fill="#93b1a3" stroke="#7a9a8c" stroke-width="1"/>
<rect x="752" y="836" width="19" height="7" fill="#15181a"/>
<circle cx="762" cy="758" r="4.800" fill="none" stroke="#1b1d1f" stroke-width="2.400"/><circle cx="762" cy="754" r="2" fill="#1b1d1f"/>
<circle cx="762" cy="798.700" r="2.800" fill="#25282a"/>
<circle cx="733.500" cy="789" r="1.200" fill="#2a2e2e"/>
<!-- left pilaster -->
<rect x="694" y="686" width="22" height="201" fill="url(#flS)"/>
<path d="M697 690 v170 M701 690 v170 M705 690 v170 M709 690 v170 M713 690 v170" stroke="#a2bcb2" stroke-width="1"/>
<rect x="691" y="677" width="26" height="12" fill="#b2cac0"/>
<rect x="692" y="860" width="26" height="27" fill="#b2cbc1"/>
<!-- centre pilaster -->
<rect x="796.500" y="684" width="13" height="203" fill="#cbe0da"/>
<rect x="809.300" y="684" width="11.500" height="203" fill="#b55a7a"/>
<rect x="795" y="677" width="14.300" height="12" fill="#b6cec5"/>
<rect x="809.300" y="677" width="13" height="12" fill="#ac5274"/>
<rect x="795.500" y="860" width="13.800" height="27" fill="#b8d0c7"/><rect x="809.300" y="860" width="12" height="27" fill="#ae5474"/>
<!-- plum surround -->
<rect x="809.300" y="633" width="115.500" height="18" fill="#a85878"/>
<rect x="809.300" y="633" width="115.500" height="1.500" fill="#6a2842"/><rect x="809.300" y="640" width="112" height="4.500" fill="#b4688a"/>
<rect x="809.300" y="645.500" width="109" height="4.500" fill="#8a3c5a"/>
<rect x="809.300" y="650" width="106.500" height="16.500" fill="#c0708e"/><rect x="809.300" y="666" width="106.500" height="8" fill="#b05c7e"/><rect x="809.300" y="665.800" width="106.500" height="1.300" fill="#843854"/>
<rect x="809.300" y="673" width="109" height="4" fill="#a04c6e"/>
<!-- recess plum -->
<rect x="821" y="677" width="75" height="196" fill="#7c3452"/>
<rect x="821" y="677" width="72" height="21" fill="#3c2028"/>
<ellipse cx="853.700" cy="692.500" rx="7.500" ry="3.800" fill="#ecd24a"/><path d="M846 688 h15 l-2 -5 h-11z" fill="#2c2420"/><path d="M846 684 l3 -3 l2.500 2.500 l2.500 -3 l2.500 3 l2.500 -2.500 l2.500 3" stroke="#c8a040" stroke-width="1" fill="none"/>
<rect x="822.500" y="697.500" width="58" height="20" fill="#6c2c48"/>
<rect x="824" y="699.500" width="8" height="16" fill="#d8d8d0"/><rect x="833" y="699.500" width="8" height="16" fill="#4a4e52"/><rect x="843" y="699.500" width="17" height="16" fill="#9a9c98"/><rect x="862" y="699.500" width="17" height="16" fill="#4c4a4e"/>
<ellipse cx="848" cy="705" rx="5" ry="2.600" fill="#e0b838"/>
<rect x="821" y="722.500" width="61" height="145" fill="#8e3e5e"/>
<rect x="828" y="730" width="19" height="101" fill="#954464" stroke="#76304c" stroke-width="1.200"/>
<rect x="857" y="730" width="19" height="101" fill="#954464" stroke="#76304c" stroke-width="1.200"/>
<rect x="827" y="846" width="20" height="12" fill="#924262" stroke="#76304c" stroke-width="1"/><rect x="856" y="846" width="20" height="12" fill="#924262" stroke="#76304c" stroke-width="1"/>
<rect x="841.300" y="836" width="18" height="7" fill="#17131a"/>
<circle cx="851.300" cy="757.700" r="4.800" fill="none" stroke="#1b161a" stroke-width="2.400"/><circle cx="851.300" cy="753.500" r="2" fill="#1b161a"/>
<rect x="848.300" y="770.500" width="6" height="5.500" fill="#2a1c22"/>
<circle cx="850.600" cy="798.800" r="2.800" fill="#24181e"/>
<rect x="876.200" y="771.500" width="3" height="6" rx="1.300" fill="#c8a050"/>
<rect x="821" y="867" width="61" height="6" fill="#a85878"/>
<!-- right pilaster -->
<rect x="896.500" y="686" width="18" height="201" fill="url(#flP)"/>
<path d="M900 690 v170 M903.500 690 v170 M907 690 v170 M910.500 690 v170 M914 690 v170" stroke="#a04c6c" stroke-width="1"/>
<rect x="894.500" y="677" width="24" height="13.500" fill="#aa5474"/>
<rect x="895" y="860" width="22" height="27" fill="#aa5474"/>
<!-- shutter right -->
<g transform="rotate(-4 951 722)"><rect x="930.500" y="687.500" width="43" height="71" fill="#bf7a9a"/><rect x="935" y="692" width="34" height="62" fill="#c07c9c" stroke="#a5607f" stroke-width="1.100"/><path d="M953 707 l1.200 2.800 l2.800 1.200 l-2.800 1.200 l-1.200 2.800 l-1.200 -2.800 l-2.800 -1.200 l2.800 -1.200z" fill="#3a2230"/></g>
<!-- plinth right -->
<rect x="913" y="836" width="65" height="60" fill="#475472"/>
<rect x="913" y="836" width="65" height="1.500" fill="#6a7690"/>
<rect x="685" y="886.500" width="249" height="4" fill="#e4e0d6"/>
</g>
<rect x="620" y="890" width="360" height="12" fill="#1e2125"/>
</svg>
<!--DOORE-->
</div>
</body>
</html>
